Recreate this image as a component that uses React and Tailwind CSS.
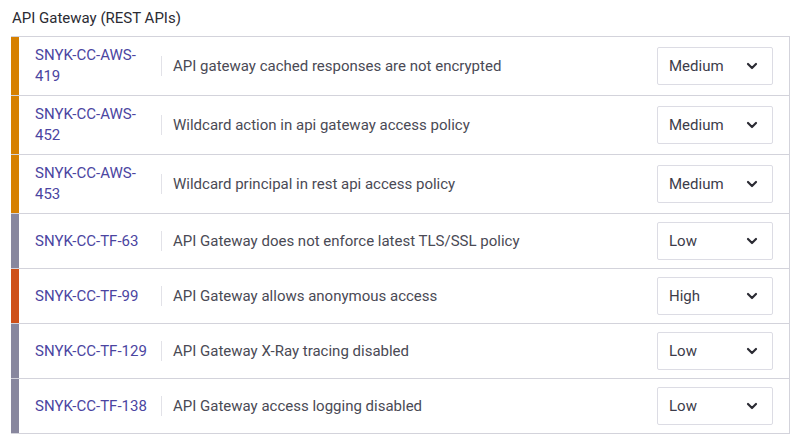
import React from 'react'

const rules = [
  { id: 'SNYK-CC-AWS-419', title: 'API gateway cached responses are not encrypted', severity: 'Medium' },
  { id: 'SNYK-CC-AWS-452', title: 'Wildcard action in api gateway access policy', severity: 'Medium' },
  { id: 'SNYK-CC-AWS-453', title: 'Wildcard principal in rest api access policy', severity: 'Medium' },
  { id: 'SNYK-CC-TF-63', title: 'API Gateway does not enforce latest TLS/SSL policy', severity: 'Low' },
  { id: 'SNYK-CC-TF-99', title: 'API Gateway allows anonymous access', severity: 'High' },
  { id: 'SNYK-CC-TF-129', title: 'API Gateway X-Ray tracing disabled', severity: 'Low' },
  { id: 'SNYK-CC-TF-138', title: 'API Gateway access logging disabled', severity: 'Low' },
]

const barColor = {
  High: 'bg-[#ce5019]',
  Medium: 'bg-[#d68000]',
  Low: 'bg-[#88879e]',
}

const Chevron = () => (
  <svg width="12" height="8" viewBox="0 0 12 8" fill="none">
    <path d="M2 2l4 4 4-4" stroke="#2b2b33" strokeWidth="2.2" strokeLinecap="round" strokeLinejoin="round" />
  </svg>
)

const SeveritySelect = ({ value }) => (
  <div className="flex h-[38px] w-[116px] items-center justify-between rounded-[2px] border border-[#dcdce4] bg-white pl-[11px] pr-[14px] text-[#3c3c4a]">
    <span>{value}</span>
    <Chevron />
  </div>
)

const RuleRow = ({ rule, last }) => (
  <div className={`flex ${last ? '' : 'border-b border-[#d3d3db]'}`}>
    <div className={`w-[8px] shrink-0 ${barColor[rule.severity]}`}></div>
    <div className="flex flex-1 items-center py-2 pl-4 pr-4">
      <a href="#" className="w-[124px] shrink-0 text-[#4b45a1]">{rule.id}</a>
      <div className="ml-[2px] h-[20px] w-px bg-[#e2e2e8]"></div>
      <div className="ml-[11px] flex-1 text-[#4a4a55]">{rule.title}</div>
      <SeveritySelect value={rule.severity} />
    </div>
  </div>
)

export default function App() {
  return (
    <div className="h-[442px] w-[800px] bg-white pl-[11px] pr-[10px] pt-[8px] text-[15px] leading-[21px]" style={{ fontFamily: 'Roboto, "Liberation Sans", sans-serif' }}>
      <h2 className="pl-px text-[15px] text-[#2b2b33]">API Gateway (REST APIs)</h2>
      <div className="mt-[7px] border-y border-r border-[#d3d3db]">
        {rules.map((rule, i) => (
          <RuleRow key={rule.id} rule={rule} last={i === rules.length - 1} />
        ))}
      </div>
    </div>
  )
}
